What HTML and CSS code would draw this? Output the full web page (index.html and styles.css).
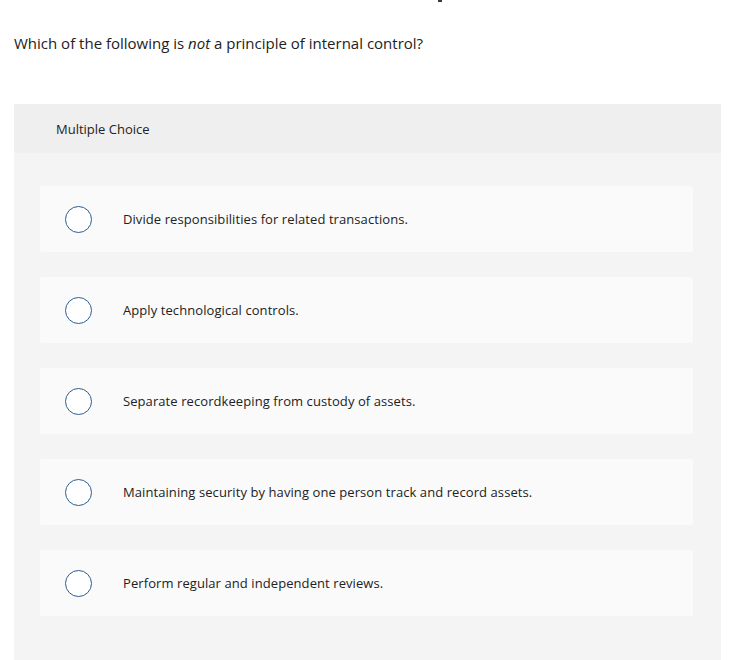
FILE: index.html
```html
<!DOCTYPE html>
<html lang="en">
<head>
<meta charset="utf-8">
<title>Question</title>
<link rel="stylesheet" href="styles.css">
</head>
<body>
<div class="topmark"><span class="mark"></span></div>
<p class="question">Which of the following is <em>not</em> a principle of internal control?</p>
<section class="panel">
  <header class="panel-head">Multiple Choice</header>
  <div class="options">
    <label class="option"><span class="radio"></span><span class="opt-text">Divide responsibilities for related transactions.</span></label>
    <label class="option"><span class="radio"></span><span class="opt-text">Apply technological controls.</span></label>
    <label class="option"><span class="radio"></span><span class="opt-text">Separate recordkeeping from custody of assets.</span></label>
    <label class="option"><span class="radio"></span><span class="opt-text">Maintaining security by having one person track and record assets.</span></label>
    <label class="option"><span class="radio"></span><span class="opt-text">Perform regular and independent reviews.</span></label>
  </div>
</section>
</body>
</html>
```
FILE: styles.css
```css
html, body {
  margin: 0;
  padding: 0;
  background: #ffffff;
}
body {
  font-family: "Open Sans", "Liberation Sans", sans-serif;
  color: #222222;
  width: 732px;
  height: 660px;
  overflow: hidden;
}
.topmark {
  height: 2px;
  display: flex;
}
.mark {
  margin-left: 438px;
  width: 4px;
  height: 2px;
  background: #3a3a3a;
}
.question {
  margin: 0;
  padding: 31px 0 0 14px;
  font-size: 15px;
  line-height: 20px;
  color: #222;
}
.question em {
  font-style: italic;
}
.panel {
  margin: 51px 11px 0 14px;
  background: #f4f4f4;
  height: 560px;
}
.panel-head {
  background: #efefef;
  height: 49px;
  display: flex;
  align-items: center;
  padding-left: 42px;
  font-size: 13px;
  color: #222;
}
.options {
  display: flex;
  flex-direction: column;
  gap: 25px;
  padding: 33px 28px 0 26px;
}
.option {
  display: flex;
  align-items: center;
  height: 66px;
  background: #fafafa;
  border-radius: 2px;
  padding-left: 25px;
}
.radio {
  width: 25px;
  height: 25px;
  border: 1.5px solid #2b5d92;
  border-radius: 50%;
  background: #fff;
  flex: none;
}
.opt-text {
  margin-left: 31px;
  font-size: 13px;
  letter-spacing: 0.08px;
  color: #222;
}
```
